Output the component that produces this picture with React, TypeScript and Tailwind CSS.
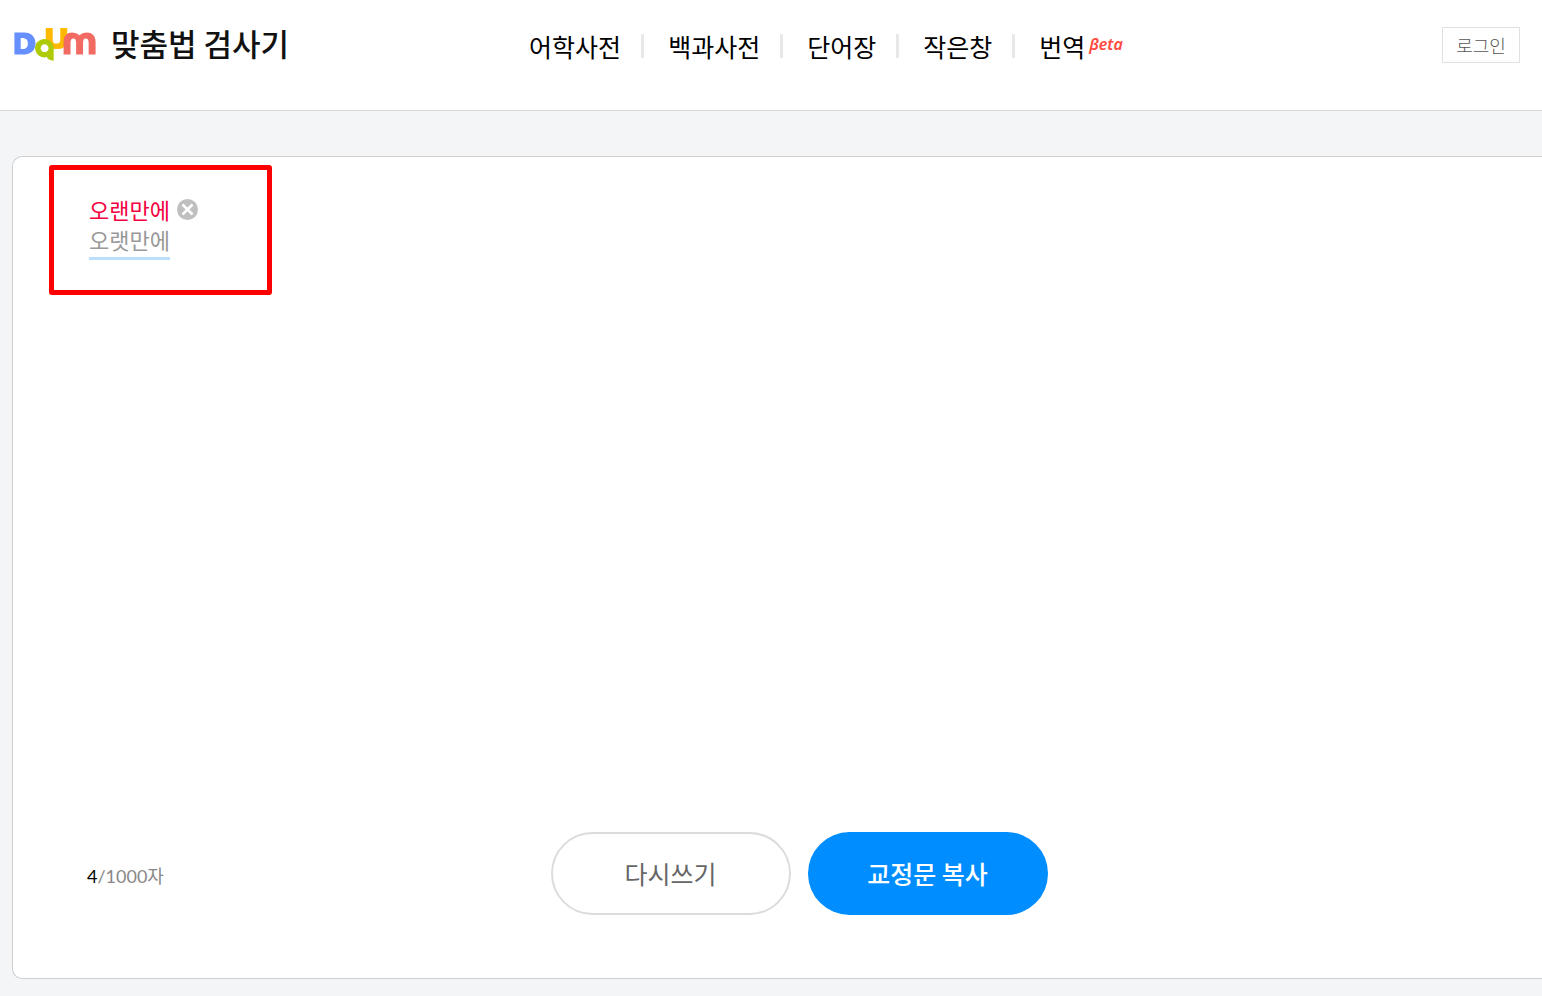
import { Fragment } from "react";

const menus = ["어학사전", "백과사전", "단어장", "작은창", "번역"];

function DaumLogo() {
  return (
    <svg viewBox="42 54 246 100" className="h-[33px] w-[82px]" role="img" aria-label="Daum">
      <path fill="#668fff" fillRule="evenodd" d="M42 68H72C93 68 106 82 106 101S93 134 72 134H42ZM61 84V118H66C78 118 83 111 83 101S78 84 66 84Z" />
      <path fill="#ffb900" d="M137 54H158V90Q158 101 169 101Q181 101 181 90V54H202V90Q202 118 169 118Q137 118 137 90Z" />
      <path fill="#afcb05" fillRule="evenodd" d="M134 87A28 28 0 1 0 140 142Q143 151 161 153V115A28 28 0 0 0 134 87ZM134 103A12 12 0 1 1 133 103Z" />
      <path fill="#f26b63" d="M191 134V98C191 78 201 68 217 68Q231 68 239 76Q247 68 261 68C278 68 288 78 288 98V134H267V99Q267 86 258 86Q250 86 250 99V134H229V99Q229 86 221 86Q212 86 212 99V134Z" />
    </svg>
  );
}

function Header() {
  return (
    <header className="flex h-[111px] items-start border-b border-[#d9d9d9] bg-white pr-[22px] pl-[14px]">
      <a href="#" className="flex shrink-0 items-start gap-[15px] pt-5">
        <span className="pt-2">
          <DaumLogo />
        </span>
        <h1 className="text-[31px] leading-[46px] font-medium whitespace-nowrap text-[#111]">맞춤법 검사기</h1>
      </a>
      <nav className="ml-60 flex items-center pt-7 text-[25px] leading-9 whitespace-nowrap">
        {menus.map((menu, i) => (
          <Fragment key={menu}>
            {i > 0 && <span className="mr-6 ml-5 h-6 w-[3px] bg-[#e8e8e8]" />}
            <a href="#">{menu}</a>
          </Fragment>
        ))}
        <em className="ml-1 self-start font-['Noto_Sans'] text-base leading-8 font-semibold text-[#ff4b3e]">βeta</em>
      </nav>
      <button className="mt-[27px] ml-auto h-9 w-[78px] shrink-0 border border-[#e1e1e1] text-lg leading-8 font-light text-[#555]">
        로그인
      </button>
    </header>
  );
}

function Correction() {
  return (
    <div className="mt-2 ml-9 h-[130px] w-[223px] rounded-[3px] border-[5px] border-[#f00] pt-6 pl-[35px] text-[22px] leading-[30px]">
      <div className="flex items-center gap-[7px]">
        <strong className="font-normal text-[#f3003e]">오랜만에</strong>
        <button aria-label="닫기">
          <svg viewBox="0 0 21 21" className="size-[21px]">
            <circle cx="10.5" cy="10.5" r="10.5" fill="#bfbfbf" />
            <path d="M5.5 5.5l10 10M15.5 5.5l-10 10" stroke="#fff" strokeWidth="2.6" />
          </svg>
        </button>
      </div>
      <span className="inline-block border-b-[3px] border-[#bbdefd] pb-[3px] text-[#999]">오랫만에</span>
    </div>
  );
}

export default function App() {
  return (
    <div className="flex min-h-screen flex-col bg-[#f3f5f7] font-['Noto_Sans_CJK_KR',sans-serif] text-black">
      <Header />
      <main className="flex flex-1 flex-col pt-[45px] pb-[17px] pl-3">
        <section className="flex flex-1 flex-col justify-between rounded-l-[10px] border border-r-0 border-[#cfcfcf] bg-white">
          <Correction />
          <div className="grid grid-cols-[1fr_auto_1fr] items-center pr-[31px] pb-[63px] pl-[74px]">
            <p className="pt-1 font-['Lato','Noto_Sans_CJK_KR',sans-serif] text-lg leading-7 text-[#888]">
              <span className="text-black">4</span>/1000자
            </p>
            <div className="flex gap-[17px] text-[25px]">
              <button className="h-[83px] w-60 rounded-full border-2 border-[#dcdcdc] text-[#666]">다시쓰기</button>
              <button className="h-[83px] w-60 rounded-full bg-[#008dff] font-medium text-white">교정문 복사</button>
            </div>
          </div>
        </section>
      </main>
    </div>
  );
}
